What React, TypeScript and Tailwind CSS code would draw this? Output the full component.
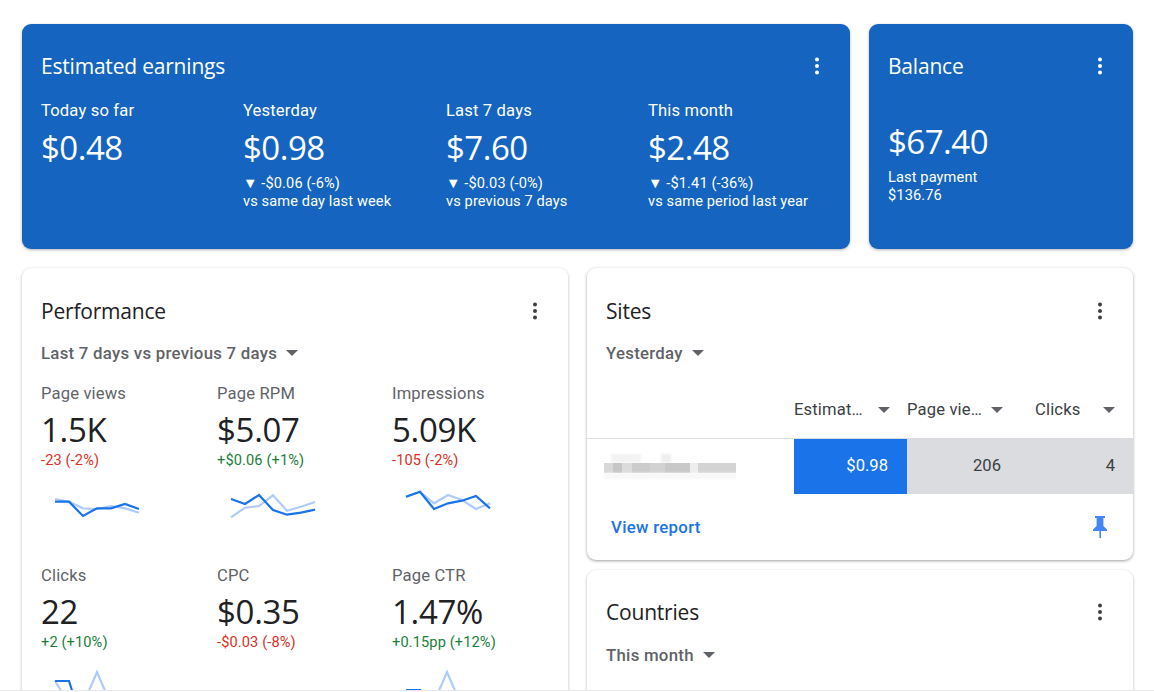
const HEAD = "font-['Open_Sans',sans-serif]";

function Kebab({ light = false }: { light?: boolean }) {
  return (
    <svg width="6" height="18" viewBox="0 0 6 18" className={light ? "fill-white" : "fill-[#3c4043]"}>
      <circle cx="3" cy="2.5" r="2" />
      <circle cx="3" cy="9" r="2" />
      <circle cx="3" cy="15.5" r="2" />
    </svg>
  );
}

function Caret() {
  return (
    <svg width="12" height="6" viewBox="0 0 12 6">
      <path d="M0 0h12L6 6z" fill="#5f6368" />
    </svg>
  );
}

const XS = [0, 14, 28, 42, 56, 70, 84];
const line = (ys: number[]) => ys.map((y, i) => `${XS[i]},${y}`).join(" ");

function Spark({ dark, lite }: { dark: string; lite: string }) {
  return (
    <svg width="90" height="40" viewBox="0 0 90 40" className="ml-[14px] mt-[16px] overflow-visible" fill="none">
      <polyline points={lite} stroke="#aecbfa" strokeWidth="2.2" />
      <polyline points={dark} stroke="#1a73e8" strokeWidth="2.2" />
    </svg>
  );
}

const metrics = [
  { label: "Page views", value: "1.5K", delta: "-23 (-2%)", up: false, dark: line([15.7, 15.7, 30, 22.3, 22.3, 18, 23]), lite: line([13, 15.7, 22.3, 23, 20, 22.3, 26.7]) },
  { label: "Page RPM", value: "$5.07", delta: "+$0.06 (+1%)", up: true, dark: line([13, 18, 9, 24, 28.7, 26.7, 23.7]), lite: line([31.3, 21.7, 20, 9.3, 24.7, 20.7, 16]) },
  { label: "Impressions", value: "5.09K", delta: "-105 (-2%)", up: false, dark: line([10.7, 5.7, 23, 17.3, 14.7, 10, 22.3]), lite: line([10.7, 5.7, 17.3, 9, 14, 23, 17.3]) },
  { label: "Clicks", value: "22", delta: "+2 (+10%)", up: true, dark: "0,13 14,13 20,32", lite: "0,13 12,32 30,32 42,4 54,32" },
  { label: "CPC", value: "$0.35", delta: "-$0.03 (-8%)", up: false, dark: "", lite: "" },
  { label: "Page CTR", value: "1.47%", delta: "+0.15pp (+12%)", up: true, dark: "0,22 14,22 16,34", lite: "29,32 41,4 53,32" },
];

const earnings = [
  { label: "Today so far", value: "$0.48" },
  { label: "Yesterday", value: "$0.98", d: "▼ -$0.06 (-6%)", s: "vs same day last week" },
  { label: "Last 7 days", value: "$7.60", d: "▼ -$0.03 (-0%)", s: "vs previous 7 days" },
  { label: "This month", value: "$2.48", d: "▼ -$1.41 (-36%)", s: "vs same period last year" },
];

const mosaic = [
  "w-[9px] bg-[#d8d8d8]",
  "w-[9px] bg-[#c6c6c6]",
  "w-[10px] bg-[#dcdcdc]",
  "w-[18px] bg-[#cccccc]",
  "w-[15px] bg-[#d2d2d2]",
  "w-[25px] bg-[#c8c8c8]",
  "w-[8px] bg-[#eeeeee]",
  "w-[38px] bg-[#d4d4d4]",
];

function CardTitle({ children, light = false }: { children: string; light?: boolean }) {
  return (
    <div className="flex items-center justify-between">
      <h2 className={`${HEAD} text-[21px] leading-[28px] tracking-[-0.2px] ${light ? "text-white" : "text-[#202124]"}`}>{children}</h2>
      <Kebab light={light} />
    </div>
  );
}

function Dropdown({ children }: { children: string }) {
  return (
    <div className="flex items-center gap-[9px] text-[16.8px] leading-5 font-medium tracking-[0.27px] text-[#5f6368]">
      {children}
      <Caret />
    </div>
  );
}

export default function App() {
  return (
    <div className="h-[692px] w-[1154px] overflow-hidden bg-white font-['Roboto',sans-serif]">
      <div className="h-[691px] overflow-hidden border-b border-[#e8eaed]">
        <div className="flex flex-col gap-[19px] pt-6 pl-[22px] pr-[21px]">
          <div className="flex gap-[19px]">
            <section className="h-[225px] w-[828px] rounded-[9px] bg-[#1565c0] pl-[19px] pr-[30px] pt-[28px] text-white shadow-[0_1px_3px_rgba(60,64,67,0.4)]">
              <CardTitle light>Estimated earnings</CardTitle>
              <div className="mt-[21px] grid grid-cols-[202px_203px_202px_1fr]">
                {earnings.map((e) => (
                  <div key={e.label}>
                    <div className="text-[16.6px] leading-5 tracking-[0.15px]">{e.label}</div>
                    <div className={`${HEAD} mt-[6px] text-[33px] leading-[42px] tracking-[-0.5px]`}>{e.value}</div>
                    {e.d && (
                      <div className="mt-[5px] text-[14.6px] leading-[18px] tracking-[0.12px]">
                        <div>{e.d}</div>
                        <div>{e.s}</div>
                      </div>
                    )}
                  </div>
                ))}
              </div>
            </section>
            <section className="h-[225px] w-[264px] rounded-[9px] bg-[#1565c0] pl-[19px] pr-[30px] pt-[28px] text-white shadow-[0_1px_3px_rgba(60,64,67,0.4)]">
              <CardTitle light>Balance</CardTitle>
              <div className={`${HEAD} mt-[41px] text-[33px] leading-[42px] tracking-[-0.5px]`}>$67.40</div>
              <div className="mt-[5px] text-[14.6px] leading-[18px] tracking-[0.12px]">
                <div>Last payment</div>
                <div>$136.76</div>
              </div>
            </section>
          </div>
          <div className="flex items-start gap-[19px]">
            <section className="h-[460px] w-[546px] shrink-0 rounded-[9px] bg-white pl-[19px] pr-[30px] pt-[29px] shadow-[0_1px_3px_rgba(60,64,67,0.4)]">
              <CardTitle>Performance</CardTitle>
              <div className="mt-[18px]"><Dropdown>Last 7 days vs previous 7 days</Dropdown></div>
              <div className="mt-[21px] grid grid-cols-[176px_175px_1fr]">
                {metrics.map((m) => (
                  <div key={m.label} className="h-[182px]">
                    <div className="text-[16.6px] leading-5 tracking-[0.15px] text-[#5f6368]">{m.label}</div>
                    <div className={`${HEAD} mt-[5px] text-[33px] leading-[42px] tracking-[-0.3px] text-[#202124]`}>{m.value}</div>
                    <div className={`text-[14.6px] leading-[19px] tracking-[0.12px] ${m.up ? "text-[#188038]" : "text-[#d93025]"}`}>{m.delta}</div>
                    {m.dark && <Spark dark={m.dark} lite={m.lite} />}
                  </div>
                ))}
              </div>
            </section>
            <div className="flex w-[546px] flex-col gap-[10px]">
              <section className="h-[292px] rounded-[9px] bg-white pt-[29px] shadow-[0_1px_3px_rgba(60,64,67,0.5)]">
                <div className="pl-[19px] pr-[30px]"><CardTitle>Sites</CardTitle></div>
                <div className="mt-[18px] pl-[19px]"><Dropdown>Yesterday</Dropdown></div>
                <div className="mt-[27px] grid h-[49px] grid-cols-[207px_113px_113px_1fr] items-center border-b border-[#dadce0] pb-[8px] text-[16.6px] tracking-[0.15px] text-[#3c4043]">
                  <div />
                  <div className="flex items-center justify-between pr-[17px]">Estimat…<Caret /></div>
                  <div className="flex items-center justify-between pr-[17px]">Page vie…<Caret /></div>
                  <div className="flex items-center justify-between pl-[15px] pr-[18px]">Clicks<Caret /></div>
                </div>
                <div className="grid h-[55px] grid-cols-[207px_113px_1fr] items-center text-[16.6px]">
                  <div className="flex h-full flex-col justify-center pl-[17px]">
                    <div className="flex h-[9px] gap-[20px] pl-[7px] blur-[1px]">
                      <div className="w-[30px] bg-[#f3f3f3]" />
                      <div className="w-[10px] bg-[#eeeeee]" />
                    </div>
                    <div className="flex h-[10px] blur-[0.4px]">
                      {mosaic.map((c, i) => (
                        <div key={i} className={c} />
                      ))}
                    </div>
                    <div className="h-[6px] w-[132px] bg-[#f8f8f8] blur-[1px]" />
                  </div>
                  <div className="flex h-full items-center justify-end bg-[#1a73e8] pr-[19px] text-white">$0.98</div>
                  <div className="flex h-full items-center bg-[#dadce0] pr-[18px] text-[#3c4043]">
                    <span className="ml-[66px]">206</span>
                    <span className="ml-auto">4</span>
                  </div>
                </div>
                <div className="flex items-center justify-between pl-[24px] pr-[25px] pt-[21px]">
                  <span className="text-[16.8px] leading-5 font-medium tracking-[0.3px] text-[#1a73e8]">View report</span>
                  <svg width="16" height="24" viewBox="0 0 16 24" className="fill-[#4285f4]">
                    <path d="M3 1h10v2h-1.6v8L15 14.5V16H9v7H7.4V16H1v-1.5L4.6 11V3H3z" />
                  </svg>
                </div>
              </section>
              <section className="h-[200px] rounded-[9px] bg-white pl-[19px] pr-[30px] pt-[28px] shadow-[0_1px_3px_rgba(60,64,67,0.4)]">
                <CardTitle>Countries</CardTitle>
                <div className="mt-[19px]"><Dropdown>This month</Dropdown></div>
              </section>
            </div>
          </div>
        </div>
      </div>
    </div>
  );
}
